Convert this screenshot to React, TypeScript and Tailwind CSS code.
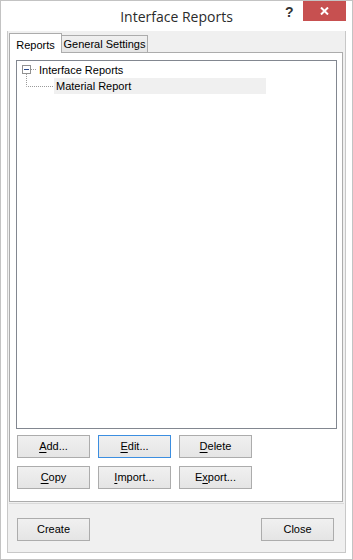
const ui = { fontFamily: '"Liberation Sans", Arial, sans-serif' };

function Btn({
  label,
  u,
  focus,
}: {
  label: string;
  u?: number;
  focus?: boolean;
}) {
  const text =
    u === undefined ? (
      label
    ) : (
      <>
        {label.slice(0, u)}
        <span className="underline underline-offset-2">{label[u]}</span>
        {label.slice(u + 1)}
      </>
    );
  return (
    <div
      className={`flex h-[23px] w-[73px] items-center justify-center border bg-gradient-to-b from-[#f0f0f0] to-[#e5e5e5] text-[11px] text-black ${
        focus ? "border-[#3c8ee0]" : "border-[#acacac]"
      }`}
    >
      {text}
    </div>
  );
}

export default function App() {
  return (
    <div
      className="flex h-[560px] w-[353px] flex-col border border-[#c3c3c3] bg-white"
      style={ui}
    >
      {/* title bar */}
      <div className="relative flex h-[30px] items-center justify-center">
        <span
          className="text-[14px] text-[#2b2b2b]"
          style={{ fontFamily: '"Open Sans", "Liberation Sans", sans-serif' }}
        >
          Interface Reports
        </span>
        <span className="absolute left-[284px] top-[1px] text-[14px] font-bold text-[#333]">
          ?
        </span>
        <div className="absolute right-[6px] top-0 flex h-[20px] w-[43px] items-center justify-center bg-[#c75050]">
          <svg width="9" height="8" viewBox="0 0 9 8">
            <path d="M1 0.5 L8 7.5 M8 0.5 L1 7.5" stroke="#fff" strokeWidth="2" />
          </svg>
        </div>
      </div>

      {/* client */}
      <div className="mx-[6px] mb-[6px] flex flex-1 flex-col border-x border-b border-[#c8c8c8] bg-[#f0f0f0]">
        <div className="flex flex-1 flex-col pl-[1px] pr-[2px] pt-[2px]">
          {/* tabs */}
          <div className="flex h-[19px] items-end text-[11px] text-black">
            <div className="relative z-10 -mb-px flex h-[20px] w-[53px] items-start justify-center border border-b-0 border-[#acacac] bg-white pt-[3px]">
              Reports
            </div>
            <div className="-ml-px flex h-[17px] w-[87px] items-center justify-center border border-b-0 border-[#acacac] bg-gradient-to-b from-[#f0f0f0] to-[#e5e5e5]">
              General Settings
            </div>
          </div>
          {/* panel */}
          <div className="flex flex-1 flex-col border border-[#acacac] bg-white pb-[12px] pl-[6px] pr-[5px] pt-[7px]">
            <div className="flex-1 border border-[#828790] bg-white pt-[1px] text-[11px] text-black">
              <div className="flex h-[16px] items-center pl-[5px]">
                <svg width="16" height="16" viewBox="0 0 16 16">
                  <rect x="0.5" y="3.5" width="8" height="8" fill="#fff" stroke="#919191" />
                  <path d="M2 7.5 H7" stroke="#2b4a8a" />
                  <path d="M9 7.5 H15" stroke="#9a9a9a" strokeDasharray="1 1" />
                  <path d="M4.5 12 V16" stroke="#9a9a9a" strokeDasharray="1 1" />
                </svg>
                <span className="pl-[1px]">Interface Reports</span>
              </div>
              <div className="flex h-[16px] items-center pl-[5px]">
                <svg width="32" height="16" viewBox="0 0 32 16">
                  <path d="M4.5 0 V8.5 H32" stroke="#9a9a9a" strokeDasharray="1 1" fill="none" />
                </svg>
                <span className="flex h-[16px] w-[212px] items-center bg-[#f0f0f0] pl-[2px]">
                  Material Report
                </span>
              </div>
            </div>
            <div className="mt-[6px] flex flex-col gap-[8px] pl-[1px]">
              <div className="flex gap-[8px]">
                <Btn label="Add..." u={0} />
                <Btn label="Edit..." u={0} focus />
                <Btn label="Delete" u={0} />
              </div>
              <div className="flex gap-[8px]">
                <Btn label="Copy" u={0} />
                <Btn label="Import..." u={0} />
                <Btn label="Export..." u={1} />
              </div>
            </div>
          </div>
        </div>
        {/* bottom bar */}
        <div className="mx-[1px] mt-[1px] flex h-[49px] items-start justify-between border-t border-[#dadada] pl-[8px] pr-[10px] pt-[14px]">
          <Btn label="Create" />
          <Btn label="Close" />
        </div>
      </div>
    </div>
  );
}
